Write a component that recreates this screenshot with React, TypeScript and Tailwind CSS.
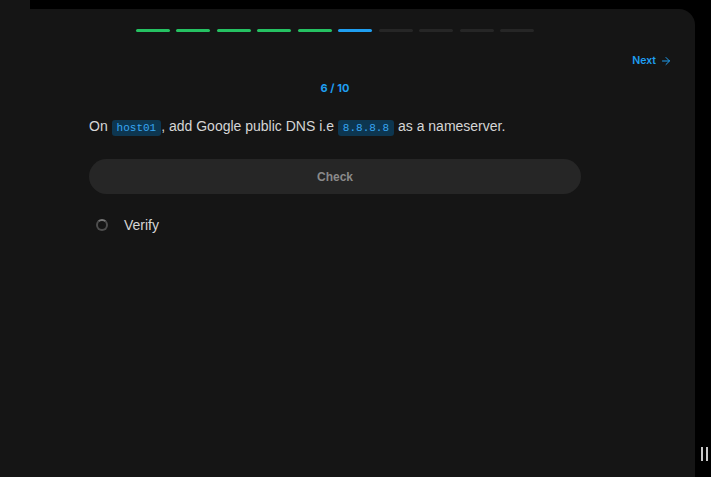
import { ArrowRight } from "lucide-react";

const steps = ["done", "done", "done", "done", "done", "current", "todo", "todo", "todo", "todo"];

const Code = ({ children }: { children: string }) => (
  <code className="rounded-[3px] bg-[#0d3650] px-[5px] py-[2px] font-['Liberation_Mono',monospace] text-[11px] text-[#38a6f2]">
    {children}
  </code>
);

export default function App() {
  return (
    <div className="flex h-[477px] w-[711px] flex-col overflow-hidden bg-black font-['Liberation_Sans',Arial,sans-serif]">
      {/* top strip */}
      <div className="h-[9px] w-[30px] shrink-0 bg-[#151515]" />

      {/* Card */}
      <div className="relative mr-[16px] flex-1 rounded-tr-[16px] bg-[#151515] pt-[20px]">
        <div className="ml-[89px] flex w-[492px] justify-center gap-[6.5px]">
          {steps.map((s, i) => (
            <div
              key={i}
              className={
                "h-[3px] w-[34px] rounded-full " +
                (s === "done" ? "bg-[#25c162]" : s === "current" ? "bg-[#1f9ef0]" : "bg-[#262626]")
              }
            />
          ))}
        </div>

        <div className="mt-[21px] flex justify-end pr-[23px]">
          <button className="flex items-center gap-[4px] font-['Inter',sans-serif] text-[10.5px] font-semibold leading-[16px] text-[#1f9ef0]">
            Next
            <ArrowRight className="h-[12px] w-[12px]" strokeWidth={2} />
          </button>
        </div>

        <div className="ml-[89px] w-[492px]">
          <div className="mt-[11px] text-center font-['Inter',sans-serif] text-[11px] font-bold leading-[16px] text-[#1f9ef0]">
            6 / 10
          </div>

          <p className="mt-[20px] text-[14px] leading-[20px] text-[#d6d6d6]">
            On <Code>host01</Code>, add Google public DNS i.e <Code>8.8.8.8</Code> as a nameserver.
          </p>

          <button className="mt-[21px] flex h-[35px] w-full items-center justify-center rounded-full bg-[#262626] text-[12px] font-bold text-[#8a8a8a]">
            Check
          </button>

          <div className="mt-[21px] flex items-center gap-[16px] pl-[7px]">
            <span className="h-[12px] w-[12px] rounded-full border-2 border-[#4d4d4d] border-t-[#777]" />
            <span className="text-[14px] leading-[20px] text-[#d6d6d6]">Verify</span>
          </div>
        </div>
      </div>

      {/* resize handle */}
      <div className="absolute left-[701px] top-[447px] flex gap-[3px]">
        <span className="h-[14px] w-[2px] bg-[#c8c8c8]" />
        <span className="h-[14px] w-[2px] bg-[#c8c8c8]" />
      </div>
    </div>
  );
}
